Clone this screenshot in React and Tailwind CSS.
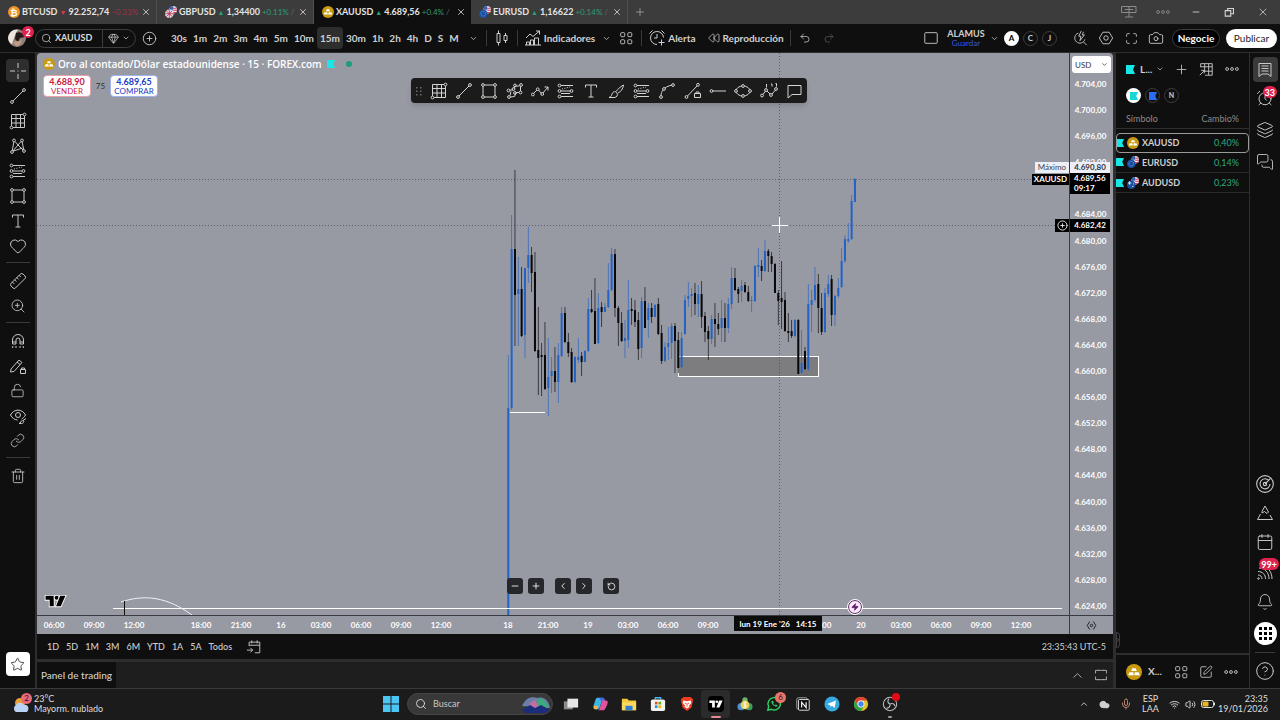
import React from 'react';
import {
  AlarmClock, Bell, Calendar, Camera, ChevronDown, ChevronLeft, ChevronRight, ChevronUp,
  CircleHelp, CirclePlus, Cloud, Gem, Heart, Layers, Link, LockOpen, Maximize,
  MessagesSquare, Mic, Minus, Plus, Redo2, Rewind, RotateCcw, Ruler, Search,
  SquarePen, Star, Trash2, Undo2, Volume2, Wifi, X, ZoomIn, Zap,
} from 'lucide-react';

// [high, low, bodyTop, bodyBottom, rising]
const CANDLES = [
  [302, 562, 355, 562, 1], [162, 357, 196, 355, 1], [117, 293, 196, 242, 0], [204, 293, 236, 241, 1],
  [214, 284, 236, 283, 0], [215, 305, 215, 282, 1], [174, 230, 202, 215, 1], [194, 239, 202, 220, 0],
  [199, 299, 219, 298, 0], [254, 342, 297, 305, 0], [290, 343, 302, 304, 0], [269, 337, 302, 336, 0],
  [285, 363, 324, 335, 1], [304, 340, 318, 323, 1], [294, 339, 318, 329, 0], [290, 350, 302, 329, 1],
  [254, 304, 260, 303, 1], [254, 290, 260, 289, 0], [280, 304, 289, 300, 0], [295, 330, 299, 329, 0],
  [303, 330, 304, 329, 1], [285, 310, 304, 307, 1], [299, 323, 303, 309, 0], [297, 309, 298, 309, 1],
  [245, 299, 256, 298, 1], [237, 260, 256, 259, 0], [225, 291, 258, 291, 0], [240, 291, 255, 290, 1],
  [249, 274, 254, 259, 0], [250, 259, 254, 259, 1], [210, 255, 237, 254, 1], [195, 238, 201, 237, 1],
  [196, 264, 201, 255, 0], [253, 293, 255, 270, 0], [259, 289, 270, 288, 0], [267, 305, 285, 288, 1],
  [227, 295, 257, 287, 1], [245, 272, 256, 258, 0], [247, 274, 257, 269, 0], [259, 307, 267, 296, 0],
  [244, 305, 248, 295, 1], [234, 275, 248, 275, 0], [250, 285, 255, 267, 1], [250, 270, 255, 264, 0],
  [251, 264, 252, 264, 1], [245, 282, 251, 281, 0], [272, 311, 280, 308, 0], [289, 309, 294, 308, 1],
  [274, 307, 290, 294, 1], [270, 306, 273, 290, 1], [270, 320, 273, 288, 0], [279, 320, 287, 315, 0],
  [279, 315, 285, 314, 1], [242, 282, 247, 281, 1], [229, 254, 243, 246, 1], [235, 264, 241, 243, 1],
  [230, 262, 240, 251, 0], [232, 264, 241, 251, 1], [228, 275, 241, 264, 0], [259, 289, 263, 279, 0],
  [273, 307, 278, 286, 0], [262, 291, 266, 286, 1], [250, 294, 266, 271, 0], [260, 282, 271, 276, 0],
  [247, 289, 265, 275, 1], [250, 289, 265, 275, 0], [245, 280, 251, 275, 1], [214, 256, 225, 251, 1],
  [215, 238, 225, 237, 0], [234, 250, 236, 241, 0], [227, 249, 233, 238, 1], [229, 240, 232, 239, 0],
  [233, 249, 239, 248, 0], [243, 259, 247, 248, 1], [212, 249, 213, 248, 1], [195, 224, 212, 214, 1],
  [207, 228, 213, 218, 0], [187, 219, 198, 218, 1], [196, 219, 198, 203, 0], [199, 219, 203, 211, 0],
  [210, 240, 211, 240, 0], [237, 272, 240, 248, 0], [208, 276, 245, 249, 0], [239, 279, 247, 278, 0],
  [260, 289, 278, 280, 0], [267, 285, 278, 283, 0], [266, 284, 267, 283, 1], [266, 321, 267, 321, 0],
  [277, 320, 310, 320, 1], [294, 317, 298, 316, 0], [231, 318, 251, 316, 1], [237, 279, 247, 252, 1],
  [214, 249, 232, 247, 1], [221, 280, 231, 255, 0], [240, 282, 255, 279, 0], [235, 280, 240, 279, 1],
  [222, 244, 231, 241, 1], [222, 273, 226, 262, 0], [242, 273, 243, 262, 1], [225, 245, 235, 243, 1],
  [195, 235, 208, 234, 1], [182, 210, 186, 208, 1], [170, 190, 186, 188, 1], [142, 187, 148, 186, 1],
  [125, 149, 126, 149, 1],
];

const TABS = [
  { symbol: 'BTCUSD', price: '92.252,74', change: '−0.33%', up: false, icon: 'btc' },
  { symbol: 'GBPUSD', price: '1,34400', change: '+0.11%', up: true, icon: 'gbp' },
  { symbol: 'XAUUSD', price: '4.689,56', change: '+0.4%', up: true, icon: 'gold', active: true },
  { symbol: 'EURUSD', price: '1,16622', change: '+0.14%', up: true, icon: 'eur' },
];

const INTERVALS = ['30s', '1m', '2m', '3m', '4m', '5m', '10m', '15m', '30m', '1h', '2h', '4h', 'D', 'S', 'M'];
const RANGES = ['1D', '5D', '1M', '3M', '6M', 'YTD', '1A', '5A', 'Todos'];
// the 4.688 step is left blank, the last price label sits there
const PRICES = Array.from({ length: 21 }, (_, i) => (i === 4 ? '' : `4.${704 - i * 4},00`));

const SESSIONS = [
  { gap: 'ml-0', times: ['06:00', '09:00', '12:00'] },
  { gap: 'ml-[27px]', times: ['18:00', '21:00', '16', '03:00', '06:00', '09:00', '12:00'] },
  { gap: 'ml-[27px]', times: ['18', '21:00', '19', '03:00', '06:00', '09:00', ''] },
  { gap: 'ml-[33px]', times: ['18:00', '20', '03:00', '06:00', '09:00', '12:00'] },
];

const WATCHLIST = [
  { symbol: 'XAUUSD', change: '0,40%', icon: 'gold', selected: true },
  { symbol: 'EURUSD', change: '0,14%', icon: 'eur' },
  { symbol: 'AUDUSD', change: '0,23%', icon: 'aud' },
];

/* ---------- Icons ---------- */

const Svg = ({ size = 18, children }) => (
  <svg width={size} height={size} viewBox="0 0 18 18" fill="none" stroke="currentColor" strokeWidth="1" className="shrink-0">
    {children}
  </svg>
);

const Dot = ({ x, y }) => <circle cx={x} cy={y} r="1.4" />;

const CrossIcon = () => <Svg><path d="M9 1v5M9 12v5M1 9h5M12 9h5M8.5 9h1" /></Svg>;
const TrendIcon = () => <Svg><path d="M4 14L14 4" /><Dot x={3} y={15} /><Dot x={15} y={3} /></Svg>;
const GridIcon = () => <Svg><path d="M2.5 14V2.5H14M15.5 4v11.5H4M2.5 6.5h13M2.5 11h13M7 2.5v13M11.5 2.5v13" /><Dot x={2.5} y={15.5} /><Dot x={15.5} y={2.5} /></Svg>;
const PatternIcon = () => <Svg><path d="M3.3 13.6L4.8 5M14.700 12.600L13.200 5M6 4.500l3 3.500 3-3.500M4 14l5-6 5 5M4.500 14l9-3" /><Dot x={3} y={15} /><Dot x={5} y={3.5} /><Dot x={13} y={3.5} /><Dot x={15} y={14} /></Svg>;
const FibIcon = () => <Svg><path d="M4 3.5h12M4 9h9M4 14.5h12M4 11.5h9" /><path d="M5 7l8-2" strokeDasharray="1 1.5" /><Dot x={2.5} y={3.5} /><Dot x={14.5} y={9} /><Dot x={2.5} y={9} /><Dot x={2.5} y={14.5} /></Svg>;
const RectIcon = () => <Svg><path d="M4.5 3h9M4.5 15h9M3 4.5v9M15 4.5v9" /><Dot x={3} y={3} /><Dot x={15} y={3} /><Dot x={3} y={15} /><Dot x={15} y={15} /></Svg>;
const TextIcon = () => <Svg><path d="M3.5 5.5V3h11v2.5M9 3v12M6.5 15h5" /></Svg>;
const PathIcon = () => <Svg><path d="M4 13.500l1-4M3.500 8H7M7.800 6.500L9 4h4.500M14.500 4.500v4.500M13 10.500h-3l-1.500 4-4 .5" /><Dot x={3} y={15} /><Dot x={2.5} y={8.5} /><Dot x={7.5} y={7} /><Dot x={9} y={3.5} /><Dot x={15} y={3} /><Dot x={14.5} y={10.5} /><Dot x={9} y={11} /></Svg>;
const ZigzagIcon = () => <Svg><path d="M2.500 11.500l3.500-3.500M7.500 8l3 3.500M12 11L17 5M13.500 5H17v3.500" /><Dot x={1.8} y={12.5} /><Dot x={6.7} y={7.3} /><Dot x={11.2} y={12} /></Svg>;
const BrushIcon = () => <Svg><path d="M2 15.500h5c3 0 4-2.500 3-4.500s-3.500-1.500-4.500 0S5 14.500 2 15.500zM9 9.500C11 7 13 5 16.500 3M11 11c2.500-1 5-4 5.500-8" /></Svg>;
const CurveIcon = () => <Svg><path d="M3 13.500C3.200 11 4 9.500 5 8.200M7 6C9 4.500 11 3.700 13.500 3.300" /><Dot x={3} y={15} /><Dot x={6} y={7} /><Dot x={15} y={3} /></Svg>;
const LineLockIcon = () => <Svg><path d="M3.500 14L13 4M10.500 11.500h6v4h-6zM12 11.500V10h3v1.500" /><Dot x={2.5} y={15} /><Dot x={14} y={2.8} /></Svg>;
const HLineIcon = () => <Svg><path d="M4 9h13" /><Dot x={2.5} y={9} /></Svg>;
const EllipseIcon = () => <Svg><ellipse cx="9" cy="9" rx="7" ry="5" /><g fill="#1e1e1e"><Dot x={9} y={4} /><Dot x={9} y={14} /><Dot x={2} y={9} /><Dot x={16} y={9} /></g></Svg>;
const ElliottIcon = () => <Svg><path d="M3 12.500L5.500 9M7 9l3 3M12 12l3.500-4M6.500 2v3.500M11 2h1v2.500M15.500 1.500h1v3" /><Dot x={2} y={13.5} /><Dot x={6} y={8} /><Dot x={11} y={13} /><Dot x={16} y={7} /></Svg>;
const CalloutIcon = () => <Svg><path d="M3 3.500h13v9H7l-4 3.500z" /></Svg>;

const MagnetIcon = () => <Svg><path d="M3.500 12V8a5.500 5.500 0 0 1 11 0v4H11V8a2 2 0 0 0-4 0v4zM3.500 10H7M11 10h3.500M4 14l-.5 2M7 14v2M11 14v2M14 14l.5 2" /></Svg>;
const DrawLockIcon = () => <Svg><path d="M2 12l8-9 3 2.500-8 9-3.500.5zM8 5l3 2.500M11.500 12.500h5v4h-5zM12.500 12.500V11h3v1.500" /></Svg>;
const HideIcon = () => <Svg><path d="M1.500 8C5 1.500 13 1.500 16.500 8c-1 2-2.500 3.200-4 4M1.500 8c1.500 3 4 4.800 7 5" /><circle cx="9" cy="8" r="2.500" /><path d="M10 16.500c2 0 1.500-3 3.500-3s1.500 3-1 3zM14 13.500l3-2" /></Svg>;
const BarsIcon = () => <Svg><path d="M4 4.500h3v9H4zM5.500 1.500v3M5.500 13.500v3M11 6.500h3v5h-3zM12.500 4v2.500M12.500 11.500V14" /></Svg>;
const IndicatorsIcon = () => <Svg><path d="M2 9l4-4 3 2.500L15.500 2M12 2h3.500v3.500M2.500 16v-3h3v3M6.500 16v-5h3v5M10.500 16V9h4v7M1 16h16" /></Svg>;
const AlertIcon = () => <Svg><path d="M15.500 8.500A6.500 6.500 0 1 0 9 15.500M9 5v4H6M1.500 4.500l3-3M16.500 4.500l-3-3M13.500 10.500v6M10.500 13.500h6" /></Svg>;
const TemplatesIcon = () => <Svg size={16}><rect x="3" y="3" width="4.500" height="4.500" rx="1" /><rect x="11" y="3" width="4.500" height="4.500" rx="1" /><rect x="3" y="11" width="4.500" height="4.500" rx="1" /><rect x="11" y="11" width="4.500" height="4.500" rx="1" /></Svg>;
const HexIcon = () => <Svg size={16}><path d="M5.500 2.500h7L16.500 9l-4 6.500h-7L1.500 9z" /><circle cx="9" cy="9" r="2.500" /></Svg>;
const QuickIcon = () => <Svg size={16}><path d="M7 3.500a5.800 5.800 0 1 0 7.500 7M13 13.500l3.500 3.500M10.500 1L7.500 7H10l-1 5 5-6.500h-2.500L13 2" /></Svg>;
const DotsIcon = () => <Svg size={16}><circle cx="3.500" cy="9" r="1.600" /><circle cx="9" cy="9" r="1.600" /><circle cx="14.500" cy="9" r="1.600" /></Svg>;
const ListIcon = () => <Svg><path d="M3 2.500h12v13l-3-2.500H6l-3 2.500zM5.500 5h7M5.500 7.500h7M5.500 10h7" /></Svg>;
const TableIcon = () => <Svg size={16}><path d="M3 7V3h13v13H8M3 6.500h13M7.500 3v9M12 3v13M7.500 11.500H16M2 16l5-5M3.500 10.500H7V14" /></Svg>;
const TargetIcon = () => <Svg size={20}><circle cx="9" cy="9" r="7.500" /><path d="M12.500 6A4.500 4.500 0 1 0 13.500 9M9 9l5-5" /><circle cx="9" cy="9" r="1.500" /></Svg>;
const PyramidIcon = () => <Svg><path d="M6 7.500L9 2l3.500 6-1.500 1.500-2.500-2L6 9zM4.500 10l-3 5.500h15L14 11" /></Svg>;
const SignalIcon = () => <Svg><path d="M2 12c2.500 0 4 1.500 4 4M2 8.500c4.500 0 7.500 3 7.500 7.500M3 5c6 0 10 4.500 10 11M8 3c5 2 8 7 8 13" /><circle cx="2.500" cy="15.500" r=".8" /></Svg>;
const GoToIcon = () => <Svg size={16}><path d="M3.500 8V3.500h12v12H10M3.500 7h12M6.500 1.500v3.500M12.500 1.500v3.500M1 12.500h6.500M5 10l2.500 2.500L5 15" /></Svg>;
const ExpandIcon = () => <Svg size={14}><path d="M2 7V3h4M16 7V3h-4M2 11v4h4M16 11v4h-4M5 3h8M5 15h8" /></Svg>;
const MonitorIcon = () => <svg width="18" height="14" viewBox="0 0 18 14" fill="none" stroke="#8a8a8a"><path d="M1.500 1.500h14.500v6H1.500zM9 1.500V12M5 12h8M5 4.500h8" /></svg>;

const TvLogo = ({ className }) => (
  <svg viewBox="0 0 36 20" className={className} fill="currentColor">
    <path d="M1 1h14v18H8V8H1z" />
    <circle cx="20" cy="4.500" r="3.500" />
    <path d="M26 1h9l-8 18h-8z" />
  </svg>
);

const Flag = ({ color, size = 9 }) => (
  <svg width={size} height={size} viewBox="0 0 9 9" className="shrink-0"><path d="M0 0h9L7 4.500 9 9H0z" fill={color} /></svg>
);

const SymbolIcon = ({ kind, size = 12 }) => {
  if (kind === 'gold') {
    return (
      <svg width={size} height={size} viewBox="0 0 14 14" className="shrink-0">
        <circle cx="7" cy="7" r="7" fill="#c79a12" />
        <path d="M5.500 3.800h3l.9 2.400H4.600zM3 7.200h3.300l.5 2.600H1.900zM7.700 7.200H11l1.100 2.600H7.200z" fill="#fff" />
      </svg>
    );
  }
  if (kind === 'btc') {
    return (
      <span className="flex size-3 shrink-0 items-center justify-center rounded-full bg-[#f0932b] font-['Open_Sans',sans-serif] text-[9px] font-bold leading-none text-white">₿</span>
    );
  }
  return (
    <svg width={size} height={size} viewBox="0 0 14 14" className="shrink-0">
      <circle cx="9.500" cy="4.500" r="4.500" fill="#e9e4ea" />
      <path d="M9.500 2.500h4M9.500 5h4.500M8 7.500h5" stroke="#d0405c" strokeWidth="1.200" />
      <path d="M5 4.500A4.500 4.500 0 0 1 9.500 0v4.500z" fill="#3a5dae" />
      <circle cx="5" cy="9" r="5" fill={kind === 'gbp' ? '#dfe0ee' : '#1d4fa0'} />
      {kind === 'gbp' && <path d="M5 4v10M0 9h10M1.500 5.500l7 7M8.500 5.500l-7 7" stroke="#cc3a58" strokeWidth="1.100" />}
      {kind === 'eur' && <circle cx="5" cy="9" r="2.800" fill="none" stroke="#59a6e0" strokeDasharray="1 1" />}
      {kind === 'aud' && <path d="M1 7h4M3 5v4M6 11h1.500M7 8h1" stroke="#fff" strokeWidth="1" />}
    </svg>
  );
};

const Badge = ({ children, className }) => (
  <span className={`absolute flex h-3 min-w-3 items-center justify-center rounded-full bg-[#e0234e] px-[2px] text-[9px] font-bold leading-none text-white ${className}`}>
    {children}
  </span>
);

const Sep = () => <span className="h-4 w-px shrink-0 bg-[#3a3a3a]" />;

const IconButton = ({ label, className = '', children }) => (
  <button aria-label={label} className={`flex shrink-0 items-center justify-center ${className}`}>{children}</button>
);

/* ---------- Header ---------- */

const TabBar = () => (
  <div className="flex h-6 shrink-0 items-center bg-[#3c3c3c]">
    {TABS.map((tab) => (
      <div
        key={tab.symbol}
        className={`flex h-full w-[157px] items-center gap-[2px] pl-2 pr-[5px] ${tab.active ? 'bg-[#0f0f0f]' : 'border-r border-[#505050]'}`}
      >
        <SymbolIcon kind={tab.icon} />
        <span className="flex flex-1 items-center gap-[2px] whitespace-nowrap">
          <span className="text-[9px] font-bold text-[#e4e4e4]">{tab.symbol}</span>
          <span className={`text-[7px] ${tab.up ? 'text-[#26a17b]' : 'text-[#e0304e]'}`}>{tab.up ? '▲' : '▼'}</span>
          <span className="text-[9px] font-bold text-[#e4e4e4]">{tab.price}</span>
          <span className={`text-[8px] ${tab.up ? 'text-[#2f9c79]' : 'text-[#9c3446]'}`}>{tab.change}</span>
          {tab.up && <span className="text-[8px] text-[#666]">/</span>}
        </span>
        <IconButton label="Cerrar pestaña"><X size={10} color="#d5d5d5" /></IconButton>
      </div>
    ))}
    <IconButton label="Nueva pestaña" className="w-6 text-[#a5a5a5]"><Plus size={12} strokeWidth={1.5} /></IconButton>
    <div className="ml-auto flex items-center text-[#d5d5d5]">
      <IconButton label="Pantallas" className="w-8"><MonitorIcon /></IconButton>
      <Sep />
      <IconButton label="Más" className="w-[33px] text-[#8a8a8a]"><DotsIcon /></IconButton>
      <IconButton label="Minimizar" className="w-[33px]"><Minus size={10} /></IconButton>
      <IconButton label="Restaurar" className="w-[34px]">
        <Svg size={11}><path d="M2 6h9v9H2zM6 6V2.500h9.500V11H11" strokeWidth="1.800" /></Svg>
      </IconButton>
      <IconButton label="Cerrar" className="w-[34px]"><X size={12} strokeWidth={1.5} /></IconButton>
    </div>
  </div>
);

const Toolbar = () => (
  <header className="flex h-7 shrink-0 items-center bg-[#0f0f0f] text-[10px] font-bold text-[#cfcfcf]">
    <div className="relative ml-2 size-[18px] rounded-full bg-[#6b5a50]">
      <svg viewBox="0 0 18 18" className="size-full rounded-full">
        <circle cx="9" cy="9" r="9" fill="#8f8179" />
        <path d="M0 9C1 3 5 0 10 1c-3 3-4 9-6 14C1 14 0 11 0 9z" fill="#efe5df" />
        <path d="M8 4c5-2 8 1 9 4l-5 1-2 4-3-3z" fill="#221a18" />
        <path d="M5 14c3-3 6-1 9-3-1 4-3 6-6 6z" fill="#c49a86" />
      </svg>
      <Badge className="-right-2 -top-[3px]">2</Badge>
    </div>
    <div className="ml-[9px] flex h-[19px] items-center rounded-full border border-[#3d3d3d] text-[#dcdcdc]">
      <button className="flex h-full w-[67px] items-center gap-[3px] border-r border-[#3d3d3d] pl-[5px] text-[9px]">
        <Search size={11} strokeWidth={1.5} />XAUUSD
      </button>
      <button aria-label="Tipo" className="flex w-8 items-center justify-center gap-[3px]">
        <Gem size={11} strokeWidth={1.5} /><ChevronDown size={8} />
      </button>
    </div>
    <IconButton label="Comparar" className="w-[27px]"><CirclePlus size={15} strokeWidth={1.4} /></IconButton>
    <span className="ml-[2px]"><Sep /></span>
    <nav className="ml-[3px] flex items-center">
      {INTERVALS.map((t) => (
        <button key={t} className={`h-[22px] rounded px-[3px] ${t === '15m' ? 'bg-[#2e2e2e]' : ''}`}>{t}</button>
      ))}
      <IconButton label="Más intervalos" className="w-6"><ChevronDown size={9} /></IconButton>
    </nav>
    <Sep />
    <IconButton label="Velas" className="w-[30px]"><BarsIcon /></IconButton>
    <Sep />
    <button className="ml-[6px] flex items-center gap-[2px]"><IndicatorsIcon />Indicadores</button>
    <IconButton label="Favoritos" className="w-[22px]"><ChevronDown size={9} /></IconButton>
    <IconButton label="Plantillas" className="mr-[6px] w-[18px]"><TemplatesIcon /></IconButton>
    <Sep />
    <button className="ml-[6px] flex items-center gap-[2px]"><AlertIcon />Alerta</button>
    <button className="ml-3 mr-[6px] flex items-center gap-[3px]"><Rewind size={12} strokeWidth={1.5} />Reproducción</button>
    <Sep />
    <IconButton label="Deshacer" className="ml-[2px] w-6"><Undo2 size={12} strokeWidth={1.5} /></IconButton>
    <IconButton label="Rehacer" className="w-6 text-[#5a5a5a]"><Redo2 size={12} strokeWidth={1.5} /></IconButton>

    <div className="ml-auto flex items-center">
      <IconButton label="Diseño" className="w-8"><Svg size={16}><rect x="2" y="3" width="14" height="12" rx="1" /></Svg></IconButton>
      <button className="w-[38px] text-center text-[9px] leading-[10px]">
        ALAMUS<span className="block text-[8px] font-normal leading-[8px] text-[#3358e8]">Guardar</span>
      </button>
      <IconButton label="Diseños" className="w-[19px]"><ChevronDown size={9} /></IconButton>
      <div className="flex gap-1">
        <button className="size-[15px] rounded-full bg-white text-[8px] text-black">A</button>
        <button className="size-[15px] rounded-full border border-[#3d3d3d] text-[8px]">C</button>
        <button className="size-[15px] rounded-full border border-[#3d3d3d] text-[8px]">J</button>
      </div>
      <span className="ml-[9px]"><Sep /></span>
      <IconButton label="Búsqueda rápida" className="w-7"><QuickIcon /></IconButton>
      <IconButton label="Configuración" className="w-6"><HexIcon /></IconButton>
      <IconButton label="Pantalla completa" className="w-[26px]"><Maximize size={13} strokeWidth={1.5} /></IconButton>
      <IconButton label="Instantánea" className="w-6"><Camera size={16} strokeWidth={1.3} /></IconButton>
      <button className="ml-1 h-[19px] w-12 rounded-full border border-[#3d3d3d] bg-black text-white">Negocie</button>
      <button className="ml-[6px] mr-[3px] h-[19px] w-[51px] rounded-full bg-white font-normal text-[#222]">Publicar</button>
    </div>
  </header>
);

/* ---------- Left tools ---------- */

const TOOLS = [
  [['Línea de tendencia', <TrendIcon />], ['Gann', <GridIcon />], ['Patrones', <PatternIcon />], ['Fibonacci', <FibIcon />], ['Rectángulo', <RectIcon />], ['Texto', <TextIcon />], ['Iconos', <Heart size={18} strokeWidth={1.3} />]],
  [['Regla', <Ruler size={18} strokeWidth={1.3} className="-scale-x-100" />], ['Acercar', <ZoomIn size={16} strokeWidth={1.3} />]],
  [
    ['Imán', <MagnetIcon />],
    ['Seguir dibujando', <DrawLockIcon />],
    ['Bloquear', <LockOpen size={15} strokeWidth={1.3} />],
    ['Ocultar', <HideIcon />],
    ['Vincular', <Link size={15} strokeWidth={1.3} />],
  ],
  [['Eliminar', <Trash2 size={16} strokeWidth={1.3} />]],
];

const LeftTools = () => (
  <aside className="flex w-[35px] shrink-0 flex-col items-center bg-[#0f0f0f] text-[#c8c8c8]">
    <IconButton label="Cruz" className="mb-px mt-[6px] size-[23px] rounded bg-[#2e2e2e]"><CrossIcon /></IconButton>
    {TOOLS.map((group, i) => (
      <div key={i} className={`flex w-full flex-col items-center ${i > 0 ? 'pt-1' : ''}`}>
        {i > 0 && <span className="mb-[5px] h-px w-6 bg-[#3a3a3a]" />}
        {group.map(([label, icon]) => (
          <IconButton key={label} label={label} className="h-[25px] w-full">{icon}</IconButton>
        ))}
      </div>
    ))}
    <IconButton label="Favoritos" className="mb-3 mt-auto size-6 rounded bg-white text-[#222]"><Star size={15} strokeWidth={1.3} /></IconButton>
  </aside>
);

/* ---------- Chart ---------- */

const FAVORITES = [
  ['Gann', <GridIcon />], ['Tendencia', <TrendIcon />], ['Rectángulo', <RectIcon />], ['Trazado', <PathIcon />],
  ['Zigzag', <ZigzagIcon />], ['Fibonacci', <FibIcon />], ['Texto', <TextIcon />], ['Pincel', <BrushIcon />],
  ['Retroceso', <FibIcon />], ['Curva', <CurveIcon />], ['Línea fija', <LineLockIcon />], ['Horizontal', <HLineIcon />],
  ['Elipse', <EllipseIcon />], ['Elliott', <ElliottIcon />], ['Globo', <CalloutIcon />],
];

const ChartDrawing = () => (
  <svg className="absolute inset-0 size-full">
    <g stroke="#5c5e68" strokeDasharray="1 2">
      <path d="M0 126.500h1032M0 172.500h1032M742.500 0v562" />
    </g>
    <rect x="641.500" y="303.500" width="140" height="20" fill="#7d7d80" stroke="#fff" />
    <path d="M742.500 304v19" stroke="#55565c" strokeDasharray="1 2" />
    {CANDLES.map(([high, low, top, bottom, up], i) => {
      const x = 471.3 + (i * 10) / 3;
      const color = up ? '#2463c6' : '#08080a';
      return (
        <g key={i} fill={color}>
          <rect x={x - 0.4} y={high} width="0.8" height={low - high} fillOpacity="0.8" />
          <rect x={x - 1} y={top} width="2" height={Math.max(bottom - top, 1)} />
        </g>
      );
    })}
    <path d="M473 359.500h35M76 555.500h949" stroke="#fff" />
    <path d="M84 549C108 541 130 544 155 562" fill="none" stroke="#f2f2f5" />
    <path d="M87.500 548v14" stroke="#111" />
    <path d="M742.500 164v16M735 172.500h16" stroke="#fff" strokeWidth="1" />
  </svg>
);

const ControlButton = ({ label, className = '', children }) => (
  <IconButton label={label} className={`size-4 rounded-[3px] bg-[#26272b] text-white ${className}`}>{children}</IconButton>
);

const Chart = () => (
  <div className="relative min-w-0 flex-1 overflow-hidden">
    <ChartDrawing />
    <div className="relative flex items-center gap-[3px] pl-[6px] pt-1 leading-[14px] text-white">
      <SymbolIcon kind="gold" />
      <h1 className="font-['Open_Sans',sans-serif] text-[10px] font-semibold">Oro al contado/Dólar estadounidense · 15 · FOREX.com</h1>
      <span className="ml-[2px]"><Flag color="#19e6e6" size={8} /></span>
      <span className="ml-2 size-[6px] rounded-full bg-[#1f9b7c]" />
    </div>
    <div className="relative mt-1 flex items-center pl-[6px] text-[9px]">
      <button className="h-[22px] w-12 rounded border border-[#e9a0ad] bg-white leading-[10px] text-[#c9203f]">
        <span className="block font-bold">4.688,90</span><span className="block text-[8px] leading-[8px]">VENDER</span>
      </button>
      <span className="w-[19px] text-center text-[8px] text-[#333]">75</span>
      <button className="h-[22px] w-12 rounded border border-[#9fb4ee] bg-white leading-[10px] text-[#2340c4]">
        <span className="block font-bold">4.689,65</span><span className="block text-[8px] leading-[8px]">COMPRAR</span>
      </button>
    </div>

    {/* Floating favorites bar */}
    <div className="absolute left-[374px] top-[25px] flex h-[25px] w-[396px] items-center rounded bg-[#1b1b1c] pl-1 text-[#d4d4d4] shadow-md">
      <svg width="8" height="10" viewBox="0 0 8 10" fill="#6a6a6a">
        {[1, 4.5, 8].map((y) => <path key={y} d={`M1 ${y}h1.500v1.500H1zM5 ${y}h1.500v1.500H5z`} />)}
      </svg>
      <div className="flex flex-1 justify-around pl-[3px]">
        {FAVORITES.map(([label, icon]) => <IconButton key={label} label={label}>{icon}</IconButton>)}
      </div>
    </div>

    {/* Navigation controls */}
    <div className="absolute bottom-[21px] left-[470px] flex items-center gap-[5px]">
      <ControlButton label="Alejar"><Minus size={10} /></ControlButton>
      <ControlButton label="Acercar"><Plus size={10} /></ControlButton>
      <ControlButton label="Izquierda" className="ml-[6px]"><ChevronLeft size={10} /></ControlButton>
      <ControlButton label="Derecha"><ChevronRight size={10} /></ControlButton>
      <ControlButton label="Restablecer" className="ml-[6px]"><RotateCcw size={9} /></ControlButton>
    </div>

    <span className="absolute bottom-px left-[811px] flex size-[14px] items-center justify-center rounded-full border border-[#5d1f66] bg-[#fbe9fb] text-[#5d1f66] outline outline-white">
      <Zap size={8} fill="currentColor" />
    </span>
    <TvLogo className="absolute bottom-2 left-2 h-3 w-[21px] overflow-visible stroke-white text-black [paint-order:stroke] [stroke-width:3px]" />

    <span className="absolute right-0 top-[109px] h-[11px] bg-[#eceef8] px-[3px] text-[8px] leading-[11px] text-[#444]">Máximo</span>
    <span className="absolute right-0 top-[121px] h-[11px] bg-black px-[2px] text-[8px] font-bold leading-[11px] text-white">XAUUSD</span>
    <button aria-label="Añadir" className="absolute right-0 top-[166px] flex h-[13px] w-[14px] items-center justify-center bg-black text-white">
      <CirclePlus size={11} strokeWidth={1.8} />
    </button>
  </div>
);

const PriceAxis = () => (
  <div className="relative flex w-11 shrink-0 flex-col border-l border-[#3a3b42] pr-[2px]">
    <div className="relative ml-[2px] mt-[3px] h-[17px] w-[39px]">
      <select aria-label="Moneda" className="block size-full appearance-none rounded-[3px] bg-white pl-[3px] text-[8px] text-[#333]">
        <option>USD</option>
      </select>
      <ChevronDown size={7} className="pointer-events-none absolute right-[3px] top-[5px] text-black" />
    </div>
    <div className="flex flex-1 flex-col justify-between pb-[2px] pt-1 text-center text-[8px] font-bold leading-[14px] text-white">
      {PRICES.map((p, i) => <span key={i} className="h-[14px]">{p}</span>)}
    </div>
    <span className="absolute left-0 top-[109px] h-[11px] w-10 bg-[#eceef8] text-center text-[8px] font-bold leading-[11px] text-[#333]">4.690,80</span>
    <span className="absolute left-0 top-[120px] h-[21px] w-10 bg-black pl-[4px] text-[8px] font-bold leading-[10px] text-white">4.689,56<br />09:17</span>
    <span className="absolute left-0 top-[166px] h-[13px] w-10 bg-black text-center text-[8px] font-bold leading-[13px] text-white">4.682,42</span>
  </div>
);

const TimeAxis = () => (
  <div className="flex h-[19px] shrink-0 border-t border-[#3a3b42]">
    <div className="relative flex min-w-0 flex-1 items-center overflow-hidden text-[8px] font-bold text-white">
      <div className="-ml-[3px] flex">
        {SESSIONS.map((session, i) => (
          <div key={i} className={`flex shrink-0 ${session.gap}`}>
            {session.times.map((t) => <span key={t} className="w-10 text-center">{t}</span>)}
          </div>
        ))}
      </div>
      <span className="absolute left-[697px] top-0 h-[15px] w-[88px] whitespace-pre bg-[#0c0c0c] text-center leading-[16px]">lun 19 Ene '26   14:15</span>
    </div>
    <button aria-label="Ajustes de escala" className="flex w-11 items-center justify-center border-l border-[#3a3b42] text-[#222]">
      <Svg size={11}><path d="M6 2.500L2 9l4 6.500M12 2.500L16 9l-4 6.500" strokeWidth="1.600" /><circle cx="9" cy="9" r="2" strokeWidth="1.600" /></Svg>
    </button>
  </div>
);

const Center = () => (
  <main className="ml-[2px] mr-[3px] flex min-w-0 flex-1 flex-col">
    <div className="flex min-h-0 flex-1 flex-col overflow-hidden rounded-t bg-[#9799a3]">
      <div className="flex min-h-0 flex-1"><Chart /><PriceAxis /></div>
      <TimeAxis />
    </div>
    <div className="flex h-[25px] shrink-0 items-center bg-[#0f0f0f] px-[7px] text-[9px] text-[#cfcfcf]">
      <div className="flex gap-px">
        {RANGES.map((r) => <button key={r} className="px-[3px] font-medium">{r}</button>)}
      </div>
      <span className="ml-1 mr-[7px]"><Sep /></span>
      <IconButton label="Ir a"><GoToIcon /></IconButton>
      <button className="ml-auto">23:35:43 UTC-5</button>
    </div>
    <div className="mt-[3px] flex h-[26px] shrink-0 items-center bg-[#1e1e1e] text-[#cfcfcf]">
      <button className="h-full w-[79px] bg-[#0f0f0f] text-[10px] font-medium">Panel de trading</button>
      <IconButton label="Abrir panel" className="ml-auto w-6"><ChevronUp size={15} strokeWidth={1.2} /></IconButton>
      <IconButton label="Maximizar panel" className="w-6"><ExpandIcon /></IconButton>
    </div>
  </main>
);

/* ---------- Watchlist ---------- */

const Watchlist = () => (
  <section className="relative flex w-[133px] shrink-0 flex-col bg-[#0f0f0f] text-[#cfcfcf]">
    <div className="flex h-8 items-center justify-between pl-[10px] pr-[9px]">
      <button className="flex items-center gap-1 text-[10px] font-bold"><Flag color="#19e6e6" /><span className="ml-px">L...</span><ChevronDown size={8} /></button>
      <IconButton label="Añadir símbolo"><Plus size={15} strokeWidth={1.3} /></IconButton>
      <IconButton label="Vista avanzada"><TableIcon /></IconButton>
      <IconButton label="Más opciones"><DotsIcon /></IconButton>
    </div>
    <div className="flex gap-1 pl-[10px] pt-[3px]">
      <button aria-label="Lista cian" className="flex size-[15px] items-center justify-center rounded-full bg-white"><Flag color="#19d6d6" size={8} /></button>
      <button aria-label="Lista azul" className="flex size-[15px] items-center justify-center rounded-full border border-[#3d3d3d]"><Flag color="#2d6cf6" size={8} /></button>
      <button className="size-[15px] rounded-full border border-[#3d3d3d] text-[7px] font-bold">N</button>
    </div>
    <table className="mt-[7px] w-full border-collapse text-[9px]">
      <thead>
        <tr className="h-[18px] border-b border-[#2e2e2e] text-[#8c8c8c]">
          <th className="pl-[10px] text-left font-normal">Símbolo</th>
          <th className="pr-[10px] text-right font-normal">Cambio%</th>
        </tr>
      </thead>
      <tbody className="before:block before:h-1">
        {WATCHLIST.map((row) => (
          <tr key={row.symbol} className={`h-5 ${row.selected ? 'rounded outline -outline-offset-1 outline-[#9a9a9a]' : 'border-b border-[#2a2a2a]'}`}>
            <td>
              <span className="flex items-center gap-[3px] font-bold">
                <Flag color="#19e6e6" size={8} /><SymbolIcon kind={row.icon} /><span>{row.symbol}</span>
              </span>
            </td>
            <td className="pr-[10px] text-right text-[#2fa87f]">{row.change}</td>
          </tr>
        ))}
      </tbody>
    </table>
    <button aria-label="Contraer" className="absolute bottom-10 left-0 flex h-4 w-1 items-center justify-center rounded-r border border-[#3d3d3d] text-[#8c8c8c]"><ChevronRight size={6} className="shrink-0" /></button>
    <div className="mt-auto flex h-[35px] items-center border-t-2 border-[#2e2e2e] pl-[10px] text-[10px] font-bold">
      <SymbolIcon kind="gold" size={16} />
      <span className="ml-[6px] w-6">X...</span>
      <IconButton label="Diseño" className="w-[18px]"><TemplatesIcon /></IconButton>
      <IconButton label="Notas" className="ml-1 w-6"><SquarePen size={14} strokeWidth={1.4} /></IconButton>
      <IconButton label="Más" className="w-[26px]"><DotsIcon /></IconButton>
    </div>
  </section>
);

const RightBar = () => (
  <aside className="flex w-[31px] shrink-0 flex-col items-center border-l border-[#2e2e2e] bg-[#0f0f0f] text-[#c8c8c8]">
    <IconButton label="Lista" className="mt-1 size-[25px] rounded bg-[#3a3a3a]"><ListIcon /></IconButton>
    <IconButton label="Alertas" className="relative h-8 w-full"><AlarmClock size={18} strokeWidth={1.3} /><Badge className="right-[3px] top-1">33</Badge></IconButton>
    <IconButton label="Objetos" className="h-8 w-full"><Layers size={18} strokeWidth={1.3} /></IconButton>
    <IconButton label="Chats" className="h-8 w-full"><MessagesSquare size={18} strokeWidth={1.2} /></IconButton>
    <div className="mt-auto flex w-full flex-col items-center">
      <IconButton label="Filtros" className="h-[29px]"><TargetIcon /></IconButton>
      <IconButton label="Pine" className="h-[29px]"><PyramidIcon /></IconButton>
      <IconButton label="Calendario" className="h-[30px]"><Calendar size={18} strokeWidth={1.3} /></IconButton>
      <IconButton label="Ideas" className="relative h-[30px] w-full"><SignalIcon /><Badge className="right-px top-px">99+</Badge></IconButton>
      <IconButton label="Notificaciones" className="h-[30px]"><Bell size={18} strokeWidth={1.2} /></IconButton>
      <IconButton label="Productos" className="mt-[5px] size-[23px] rounded-full bg-white text-black">
        <svg width="13" height="13" viewBox="0 0 13 13" fill="currentColor">
          {[0, 5, 10].map((y) => [0, 5, 10].map((x) => <rect key={`${x}-${y}`} x={x} y={y} width="3" height="3" />))}
        </svg>
      </IconButton>
      <span className="mt-[7px] h-px w-5 bg-[#3a3a3a]" />
      <IconButton label="Ayuda" className="h-[35px]"><CircleHelp size={20} strokeWidth={1.2} /></IconButton>
    </div>
  </aside>
);

/* ---------- Windows taskbar ---------- */

const APPS = [
  ['Vista de tareas', <svg viewBox="0 0 18 18"><rect x="1" y="6" width="10" height="9" fill="#8a8a8a" /><rect x="5" y="3" width="12" height="10" fill="#e6e6e6" /></svg>],
  ['Copilot', (
    <svg viewBox="0 0 18 18">
      <path d="M6 2h6l-3 10c-.5 2-1.500 3-3 3H4c-2 0-3-2-2-5l2-6c.4-1 1-2 2-2z" fill="#38b6e8" />
      <path d="M12 2c1.500 0 2 1 2.500 3H16c2 0 2 2 1 5l-2 4c-.6 1.500-1.500 2-3 2H6c2 0 2.500-1 3-3z" fill="#e0559a" />
      <path d="M8 2h4c1.500 0 2 1 2.500 3H10z" fill="#4664e8" />
      <path d="M2 11h5l-1 4H4c-2 0-2.500-2-2-4z" fill="#f2b33c" />
    </svg>
  )],
  ['Explorador', <svg viewBox="0 0 18 18"><path d="M1 3h6l2 2h8v11H1z" fill="#f6c83c" /><path d="M1 7h16v9H1z" fill="#fbd75e" /><path d="M5 11h8v5H5z" fill="#2c7ed6" /></svg>],
  ['Store', <svg viewBox="0 0 18 18"><path d="M6 4V2h6v2" fill="none" stroke="#45b6ee" strokeWidth="1.500" /><rect x="1" y="4" width="16" height="13" rx="2" fill="#f2f2f2" /><path d="M5.500 6.500h3v3h-3z" fill="#e8502c" /><path d="M9.500 6.500h3v3h-3z" fill="#62b020" /><path d="M5.500 10.500h3v3h-3z" fill="#1d9ae0" /><path d="M9.500 10.500h3v3h-3z" fill="#f4b400" /></svg>],
  ['Brave', <svg viewBox="0 0 18 18"><path d="M5 1h8l3 3-2 9-5 4-5-4-2-9z" fill="#ee3d23" /><path d="M5 5l4 1 4-1 1 3-3 3 1 1-3 2-3-2 1-1-3-3z" fill="#fff" /><path d="M6.500 8l2 .5M11.500 8l-2 .5M9 9v3" stroke="#ee3d23" /></svg>],
  ['TradingView', <span className="flex size-full items-center justify-center rounded bg-black"><TvLogo className="w-[14px] text-white" /></span>],
  ['Finanzas', <svg viewBox="0 0 18 18"><circle cx="9" cy="4.500" r="3" fill="#6fb26a" /><circle cx="4.500" cy="12" r="4" fill="#4d8fd0" /><circle cx="13.500" cy="12" r="4" fill="#3d9e5c" /><circle cx="9" cy="10" r="5" fill="#e7cf5a" /><path d="M11 7.500c-4-1-4 2.500-2 2.500s2 3.500-2 2.500M9 6v8" fill="none" stroke="#fff" /></svg>],
  ['WhatsApp', <svg viewBox="0 0 18 18"><path d="M2 16l1-4a7 7 0 1 1 3 3z" fill="none" stroke="#2ed062" strokeWidth="1.600" /><path d="M6 6c0 3 3 6 6 6l1-1.500-2-1-1 .8c-1-.5-1.500-1-2-2l.8-1-1-2z" fill="#2ed062" /></svg>],
  ['Notion', <svg viewBox="0 0 18 18"><rect x="2" y="2" width="12" height="13" rx="2" fill="#222" stroke="#aaa" /><rect x="4" y="4" width="12" height="12" rx="1" fill="#111" stroke="#eee" /><path d="M7.500 13V7l5 6V7" fill="none" stroke="#fff" strokeWidth="1.300" /></svg>],
  ['Telegram', <svg viewBox="0 0 18 18"><circle cx="9" cy="9" r="8.500" fill="#35a9e0" /><path d="M3.500 9l10-4-1.500 8.500-3-2.500-1.500 1.500L7 10.500z" fill="#fff" /></svg>],
  ['Chrome', (
    <svg viewBox="0 0 18 18">
      <circle cx="9" cy="9" r="8" fill="#e8bf2c" />
      <path d="M2.100 5A8 8 0 0 1 15.900 5H9a4 4 0 0 0-3.500 6z" fill="#e04334" />
      <path d="M2.100 5A8 8 0 0 0 9 17l3.500-6A4 4 0 0 1 5.500 11z" fill="#2ba24c" />
      <circle cx="9" cy="9" r="3.900" fill="#fff" /><circle cx="9" cy="9" r="3" fill="#4285f4" />
    </svg>
  )],
  ['OBS', <svg viewBox="0 0 18 18" fill="none" stroke="#bbb"><circle cx="9" cy="9" r="7.500" strokeWidth="1.200" /><path d="M9 9c-3-1-3-4-1-6M9 9c3-1.500 5 0 5.500 2.500M9 9c.5 3-1.500 5-4 4.500" strokeWidth="1.300" /></svg>],
];

const Taskbar = () => (
  <footer className="flex h-8 shrink-0 items-center border-t border-[#3a3a3a] bg-[#1b1b1b] pb-px text-[9px] leading-[10px] text-[#dedede]">
    <button className="flex flex-1 items-center gap-1 pl-3 text-left">
      <span className="relative size-[18px]">
        <svg viewBox="0 0 18 18">
          <circle cx="8" cy="8" r="5" fill="#e8a03c" />
          <path d="M4 17a4 4 0 0 1 0-7c1-3 6-3 8 0 4-1 6 4 3 7z" fill="#b9d3f4" />
        </svg>
        <span className="absolute -right-[2px] -top-[2px] size-[11px] rounded-full bg-[#e8697a] text-center text-[8px] leading-[11px] text-[#3a1016]">2</span>
      </span>
      <span>23°C<br />Mayorm. nublado</span>
    </button>
    <div className="flex items-center">
      <IconButton label="Inicio" className="w-[29px]">
        <svg width="16" height="16" viewBox="0 0 16 16" fill="#4cc4f4"><path d="M0 0h7.500v7.500H0zM8.500 0H16v7.500H8.500zM0 8.500h7.500V16H0zM8.500 8.500H16V16H8.500z" /></svg>
      </IconButton>
      <label className="ml-[2px] flex h-[22px] w-[146px] items-center gap-[6px] overflow-hidden rounded-full border border-[#454545] bg-[#383838] pl-[7px]">
        <Search size={12} strokeWidth={1.8} className="shrink-0" />
        <input aria-label="Buscar" placeholder="Buscar" className="w-full min-w-0 bg-transparent text-[9px] placeholder:text-[#c8c8c8]" />
        <svg width="32" height="20" viewBox="0 0 32 20" className="shrink-0">
          <path d="M2 12C6 3 12 2 18 4c7-2 11 4 12 10z" fill="#6c7fa8" />
          <path d="M17 5c6-2 10 3 11 9H17z" fill="#3fa87c" />
          <path d="M10 9l5-3 4 8H8z" fill="#c26fa0" />
          <path d="M2 16l8-5 5 3 6-3 9 5-4 3H6z" fill="#1c2c7c" />
        </svg>
      </label>
      <div className="ml-[3px] flex">
        {APPS.map(([name, icon]) => (
          <button key={name} aria-label={name} className={`relative flex h-7 w-[29px] items-center justify-center rounded ${name === 'TradingView' ? 'bg-[#2b2b2b]' : ''}`}>
            <span className="size-4">{icon}</span>
            {name === 'TradingView' && <span className="absolute bottom-0 h-[2px] w-[10px] rounded bg-[#e58a94]" />}
            {name === 'WhatsApp' && <span className="absolute right-[2px] top-[2px] size-[11px] rounded-full bg-[#e8776b] text-center text-[8px] leading-[11px] text-[#3a1016]">6</span>}
            {name === 'OBS' && <span className="absolute right-1 top-[3px] size-2 rounded-full bg-[#e00b14]" />}
            {name === 'OBS' && <span className="absolute bottom-0 h-[2px] w-1 rounded bg-[#9a9a9a]" />}
          </button>
        ))}
      </div>
    </div>
    <div className="flex flex-1 items-center justify-end pr-3">
      <IconButton label="Iconos ocultos" className="w-[21px]"><ChevronUp size={10} /></IconButton>
      <IconButton label="OneDrive" className="w-[21px]"><Cloud size={11} fill="#d0d0d0" color="#d0d0d0" /></IconButton>
      <IconButton label="Micrófono" className="w-[21px] text-[#b9836a]"><Mic size={12} /></IconButton>
      <button className="w-[29px] text-center">ESP<br />LAA</button>
      <button aria-label="Red, sonido y batería" className="ml-1 flex items-center gap-[5px]">
        <Wifi size={11} /><Volume2 size={11} />
        <svg width="14" height="8" viewBox="0 0 14 8"><rect x=".5" y=".5" width="12" height="7" rx="2" fill="none" stroke="#ddd" /><rect x="1.500" y="1.500" width="6" height="5" rx="1" fill="#e3b62c" /><path d="M13.500 2.500v3" stroke="#ddd" /></svg>
      </button>
      <button className="w-[53px] text-right">23:35<br />19/01/2026</button>
    </div>
  </footer>
);

export default function App() {
  return (
    <div className="flex h-screen flex-col overflow-hidden bg-[#2e2e2e] font-['Lato','Open_Sans',sans-serif]">
      <TabBar />
      <Toolbar />
      <div className="mt-px flex min-h-0 flex-1">
        <LeftTools />
        <Center />
        <Watchlist />
        <RightBar />
      </div>
      <Taskbar />
    </div>
  );
}
